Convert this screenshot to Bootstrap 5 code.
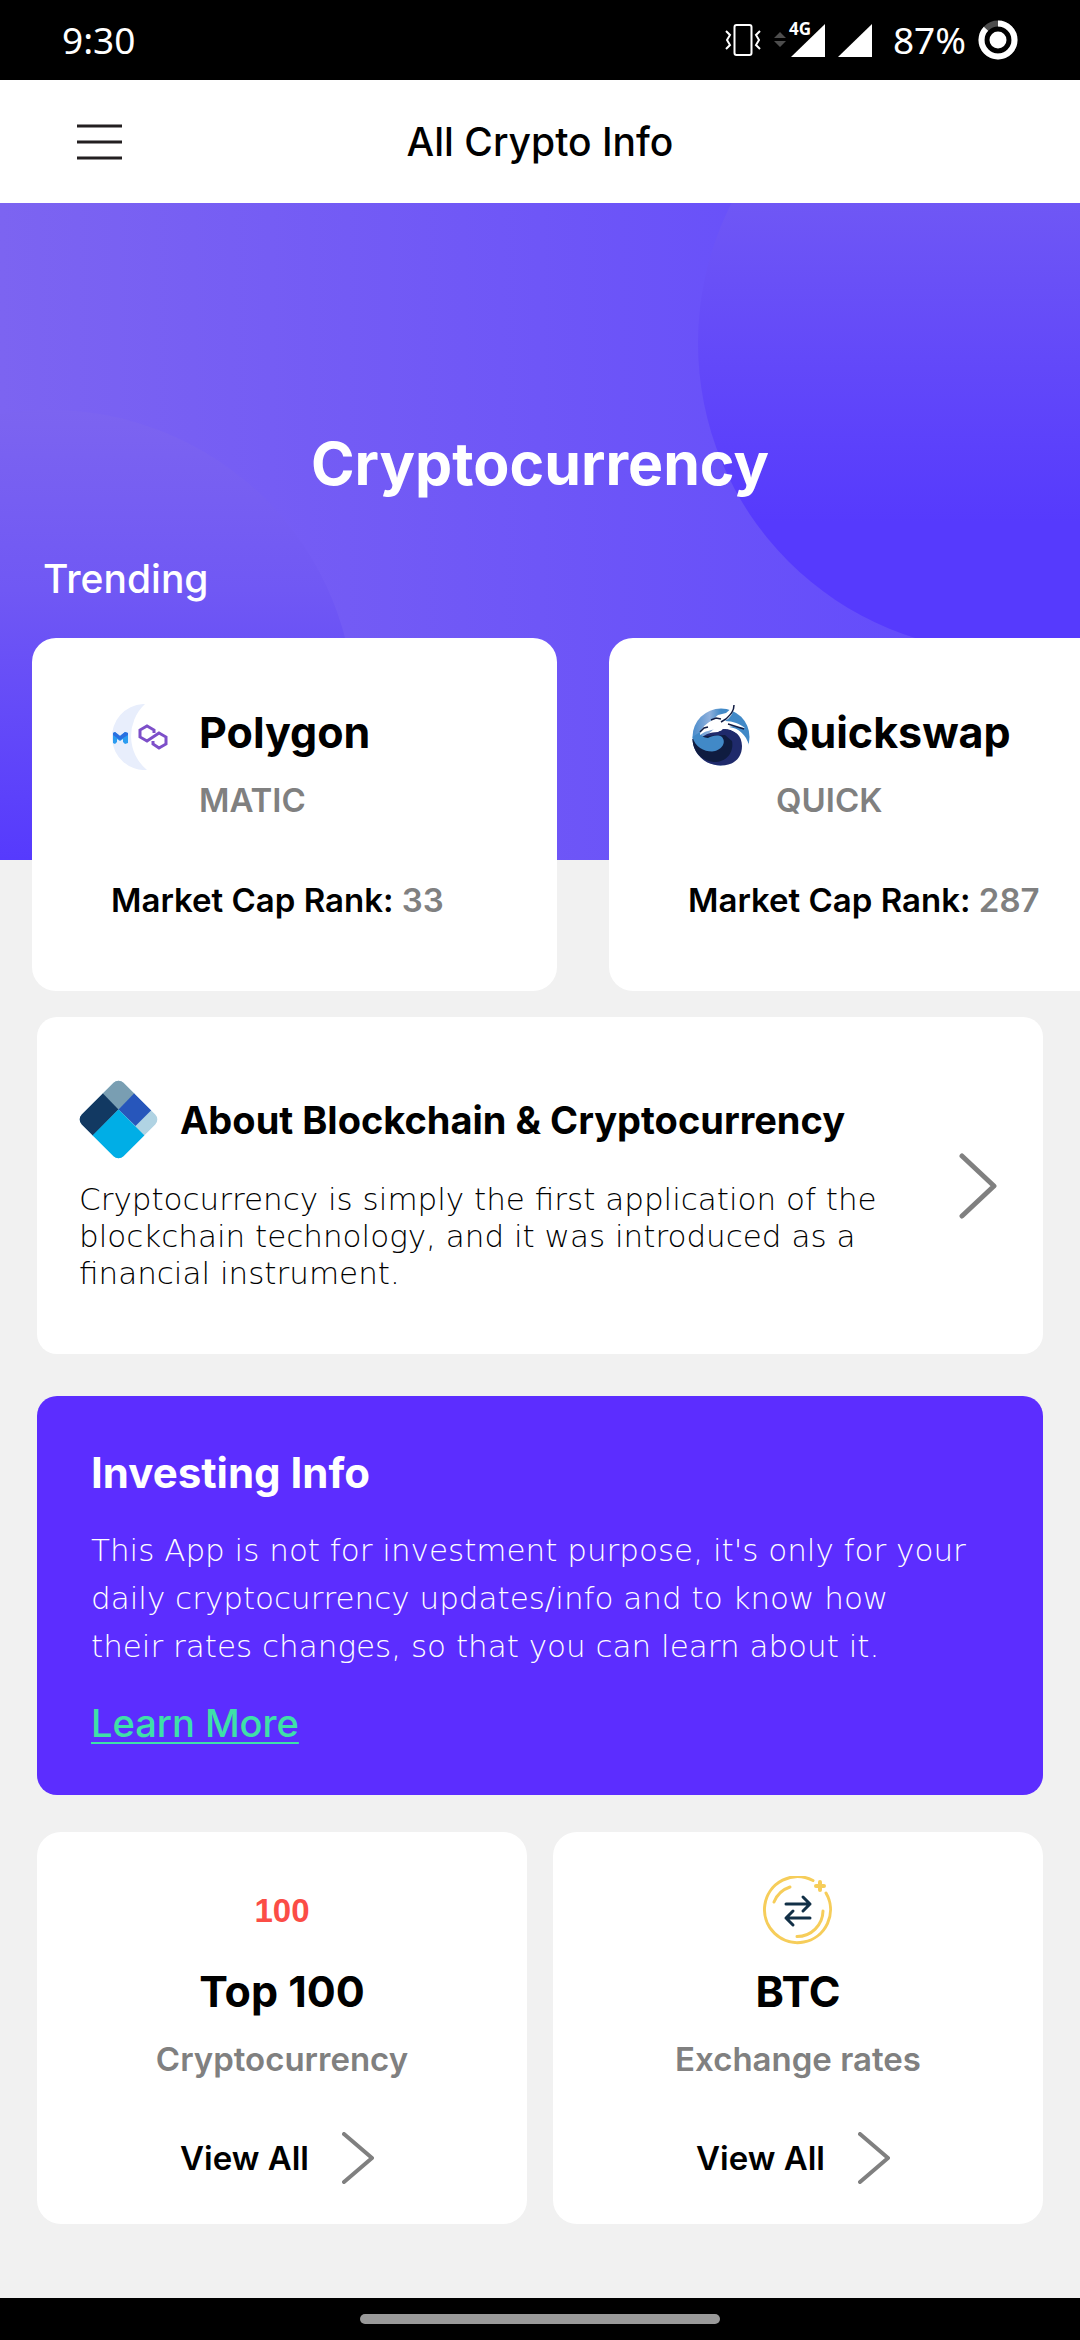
<!DOCTYPE html>
<html lang="en">
<head>
<meta charset="utf-8">
<meta name="viewport" content="width=device-width, initial-scale=1">
<title>All Crypto Info</title>
<link href="https://cdn.jsdelivr.net/npm/bootstrap@5.3.0/dist/css/bootstrap.min.css" rel="stylesheet">
<style>
  body { font-family: Inter, "Open Sans", sans-serif; background: #f1f1f1; color: #000; }
  h1, h2, h3, p { margin: 0; }
  svg { display: block; flex: none; }

  .status-bar { height: 80px; padding: 0 62px; background: #000; color: #fff; font: 400 37px/48px "Noto Sans", sans-serif; }
  .status-icons { gap: 12px; }
  .net-label { font: 700 17px "Noto Sans", sans-serif; }

  .app-bar { height: 123px; background: #fff; }
  .menu-btn { left: 77px; }
  .text-title { font-size: 39px; line-height: 44px; font-weight: 500; }

  .hero { padding: 227px 43px 259px; background: linear-gradient(90deg, #7c64f1, #6e56f7 50%, #6049fd); color: #fff; }
  .hero-title { font-size: 59px; line-height: 68px; font-weight: 700; margin-bottom: 59px; }

  .trend-list { margin-top: -222px; padding-left: 32px; gap: 52px; }
  .tile { background: #fff; border-radius: 24px; }
  .trend-tile { flex: 0 0 525px; padding: 66px 0 72px 79px; }
  .trend-head { gap: 22px; margin-bottom: 62px; }
  .trend-names { padding-top: 4px; }
  .coin-name { font-size: 43px; line-height: 48px; font-weight: 700; }
  .text-sub { font-size: 33px; line-height: 38px; font-weight: 600; }
  .text-dim { color: #808080; }
  .mt-sub { margin-top: 25px; }

  .page-body { padding: 26px 37px 74px; }
  .about-tile { padding: 63px 46px 62px 42px; border-radius: 20px; }
  .about-head { gap: 22px; margin-bottom: 22px; }
  .about-title { font-size: 38px; line-height: 44px; font-weight: 700; }
  .text-thin { font-family: "DejaVu Sans Light", "DejaVu Sans ExtraLight", Inter, sans-serif; font-size: 31px; font-weight: 200; }
  .about-text { line-height: 37px; }

  .invest-tile { margin-top: 42px; padding: 54px 54px 50px; border-radius: 20px; background: #5c2dff; color: #fff; }
  .invest-title { font-size: 42px; line-height: 46px; font-weight: 700; }
  .invest-text { margin: 30px 0 31px; line-height: 48px; }
  .learn-link { color: #3fe0a8; font-size: 38px; text-decoration-thickness: 2px; text-underline-offset: 5px; }

  .tile-grid { margin-top: 37px; gap: 26px; }
  .stat-tile { padding: 44px 0 40px; }
  .icon-box { height: 69px; margin-bottom: 22px; }
  .hundred { font: 700 33px/69px "Liberation Sans", sans-serif; color: #fb4d46; }
  .view-link { margin-top: 54px; gap: 33px; padding-right: 10px; color: #000; text-decoration: none; }

  .nav-strip { height: 42px; background: #000; }
  .nav-handle { width: 33.33%; height: 10px; border-radius: 5px; background: #999; }
</style>
</head>
<body class="d-flex flex-column min-vh-100 overflow-x-hidden">

<div class="status-bar d-flex align-items-center justify-content-between">
  <span>9:30</span>
  <div class="status-icons d-flex align-items-center">
    <svg width="36" height="34" viewBox="0 0 36 34" fill="none" stroke="#fff" stroke-width="2">
      <rect x="9.500" y="2" width="17" height="30" rx="2"/>
      <path d="M1 8l4 4-3 5 3 5-4 4M35 8l-4 4 3 5-3 5 4 4"/>
    </svg>
    <svg width="53" height="54" viewBox="0 -8 53 54">
      <path d="M1 17l6-6 6 6zM1 20h12l-6 6z" fill="#4d4d4d"/>
      <path d="M52 3v33H18z" fill="#fff"/>
      <text class="net-label" x="16" y="14" fill="#fff" stroke="#000" stroke-width="2" paint-order="stroke">4G</text>
    </svg>
    <svg width="35" height="38" viewBox="0 0 35 38"><path d="M34 3v33H0z" fill="#fff"/></svg>
    <span class="ms-2">87%</span>
    <svg width="40" height="40" viewBox="0 0 40 40">
      <circle cx="20" cy="20" r="16.500" fill="none" stroke="#4d4d4d" stroke-width="6"/>
      <circle cx="20" cy="20" r="16.500" fill="none" stroke="#fff" stroke-width="6" pathLength="100" stroke-dasharray="87 13" transform="rotate(-90 20 20)"/>
      <circle cx="20" cy="20" r="8.500" fill="#fff"/>
    </svg>
  </div>
</div>

<header class="app-bar d-flex align-items-center justify-content-center position-relative">
  <button type="button" class="menu-btn btn p-0 border-0 rounded-0 position-absolute" aria-label="Menu">
    <svg width="45" height="36" viewBox="0 0 45 36" stroke="#231f20" stroke-width="3"><path d="M0 2h45M0 18h45M0 34h45"/></svg>
  </button>
  <h1 class="text-title">All Crypto Info</h1>
</header>

<section class="hero position-relative">
  <svg class="position-absolute top-0 start-0 w-100 h-100" viewBox="0 0 1080 657" preserveAspectRatio="none">
    <defs>
      <linearGradient id="orbRight" gradientUnits="userSpaceOnUse" x1="0" y1="0" x2="0" y2="320"><stop offset="0" stop-color="#6f57f5"/><stop offset="1" stop-color="#563afd"/></linearGradient>
      <linearGradient id="orbLeft" gradientUnits="userSpaceOnUse" x1="0" y1="207" x2="0" y2="657"><stop offset="0" stop-color="#7c64f0"/><stop offset=".4" stop-color="#7058f4"/><stop offset="1" stop-color="#563afd"/></linearGradient>
    </defs>
    <circle cx="1007" cy="140" r="309" fill="url(#orbRight)"/>
    <circle cx="50" cy="512" r="305" fill="url(#orbLeft)"/>
  </svg>
  <div class="position-relative">
    <h2 class="hero-title text-center">Cryptocurrency</h2>
    <h3 class="text-title">Trending</h3>
  </div>
</section>

<section class="trend-list d-flex position-relative overflow-hidden">
  <article class="tile trend-tile">
    <div class="trend-head d-flex">
      <svg width="66" height="66" viewBox="2 0 66 66">
        <path d="M34 0A33 33 0 1 0 38 66A44 44 0 0 1 36 0z" fill="#e8eefc"/>
        <path d="M4 29l2-1 5 4 5-4 3 1v10l-3 1-2-2v-3l-3 2-3-2v3l-2 2-2-1z" fill="#2b9cf0"/>
        <path d="M4 29l2-1 5 4 5-4 3 1v2l-8 5-7-5z" fill="#2a6fe0"/>
        <path d="M45 29v-3l-7-4-7 4v7l7 4 12-8 7 4v7l-7 4-6-4v-3" fill="none" stroke="#7d4fc9" stroke-width="3"/>
      </svg>
      <div class="trend-names">
        <h3 class="coin-name">Polygon</h3>
        <p class="text-sub text-dim mt-sub">MATIC</p>
      </div>
    </div>
    <p class="text-sub">Market Cap Rank: <span class="text-dim">33</span></p>
  </article>

  <article class="tile trend-tile">
    <div class="trend-head d-flex">
      <svg width="66" height="66" viewBox="-4 -1 66 66">
        <defs><linearGradient id="sky" x1="0" y1="0" x2="1" y2="0"><stop offset="0" stop-color="#4a8ccb"/><stop offset=".3" stop-color="#8fb0dc"/><stop offset=".5" stop-color="#4189c7"/></linearGradient></defs>
        <circle cx="29" cy="32" r="28.500" fill="url(#sky)"/>
        <path d="M29 60.500L11 34L24 22C40 20 50 26 57 40C54 54 42 62 29 60.500z" fill="#fff"/>
        <path d="M.500 34C1 49 13 60.500 29 60.500C43 60.500 50 52 50 41C50 30 42 23 31 24L26 27C18 27 13 30 10 32z" fill="#1f2a6b"/>
        <path d="M.500 34C1 47 10 57 24 57C36 56 42 46 40 36L33 30 14 31z" fill="#0f1c40"/>
        <path d="M.500 32C3 42 12 46.500 20 46.500C29 46 35 38 30 32C26 29 20 31 16 33C12 33 8 30 8 27z" fill="#4189c7"/>
        <path d="M8 30c0-5 4-10 11-14l7-6 8-2 8-7c0 7-4 12-9 15 8 0 15 3 20 7-8-1-12-3-16-1 10 1 17 8 20 18-7-9-16-16-26-17l-2 3-4-2c-6 1-12 2-17 6z" fill="#fff"/>
        <path d="M42 0c0 6-3 9-8 14l-5 3M36 19l16 5M8 27l4-4 4-1M19 15l5-2 5 1" fill="none" stroke="#101b42" stroke-width="1.500"/>
      </svg>
      <div class="trend-names">
        <h3 class="coin-name">Quickswap</h3>
        <p class="text-sub text-dim mt-sub">QUICK</p>
      </div>
    </div>
    <p class="text-sub">Market Cap Rank: <span class="text-dim">287</span></p>
  </article>
</section>

<main class="page-body flex-grow-1">
  <article class="tile about-tile d-flex align-items-center justify-content-between">
    <div>
      <div class="about-head d-flex align-items-center">
        <svg width="79" height="79" viewBox="0 0 79 79">
          <defs><clipPath id="gem"><rect x="10" y="10" width="59" height="59" rx="7" transform="rotate(45 39.500 39.500)"/></clipPath></defs>
          <g clip-path="url(#gem)">
            <rect width="79" height="79" fill="#b0d3e3"/>
            <path d="M39.500-4l17 17-17 17-17-17z" fill="#799eb2"/>
            <path d="M23.500 13l16 16.500-26 26.500-20-20z" fill="#123962"/>
            <path d="M55.500 13l17 17-16 16-17-16.500z" fill="#2756bb"/>
            <path d="M39.500 29.500l27 27-27 27-27-27z" fill="#00aee6"/>
          </g>
        </svg>
        <h2 class="about-title">About Blockchain &amp; Cryptocurrency</h2>
      </div>
      <p class="about-text text-thin">Cryptocurrency is simply the first application of the<br>blockchain technology, and it was introduced as a<br>financial instrument.</p>
    </div>
    <svg width="38" height="66" viewBox="0 0 38 66" fill="none" stroke="#808080" stroke-width="5" stroke-linecap="round" stroke-linejoin="round"><path d="M3 3l32 30L3 63"/></svg>
  </article>

  <article class="invest-tile">
    <h2 class="invest-title">Investing Info</h2>
    <p class="invest-text text-thin">This App is not for investment purpose, it's only for your<br>daily cryptocurrency updates/info and to know how<br>their rates changes, so that you can learn about it.</p>
    <a href="#" class="text-title learn-link d-block">Learn More</a>
  </article>

  <div class="tile-grid d-flex">
    <article class="tile stat-tile flex-fill w-50 text-center">
      <div class="icon-box d-flex align-items-center justify-content-center"><span class="hundred">100</span></div>
      <h2 class="coin-name">Top 100</h2>
      <p class="text-sub text-dim mt-sub">Cryptocurrency</p>
      <a href="#" class="view-link text-sub d-flex align-items-center justify-content-center">View All
        <svg width="32" height="52" viewBox="0 0 32 52" fill="none" stroke="#808080" stroke-width="4" stroke-linecap="round" stroke-linejoin="round"><path d="M2 2l28 24L2 50"/></svg>
      </a>
    </article>
    <article class="tile stat-tile flex-fill w-50 text-center">
      <div class="icon-box d-flex align-items-center justify-content-center">
        <svg width="70" height="70" viewBox="0 0 70 70" fill="none" stroke="#f6cd5a" stroke-width="3" stroke-linecap="round">
          <path d="M50 4.500A33 33 0 1 0 63 17"/>
          <path d="M11 26A26 26 0 0 1 27 11M60 35A26 26 0 0 1 34 60.500"/>
          <path d="M57 6v8M53 10h8" stroke-width="4"/>
          <path d="M23 28h24M40 21l7 7-7 7M47 42H23M30 35l-7 7 7 7" stroke="#123047" stroke-linejoin="round"/>
        </svg>
      </div>
      <h2 class="coin-name">BTC</h2>
      <p class="text-sub text-dim mt-sub">Exchange rates</p>
      <a href="#" class="view-link text-sub d-flex align-items-center justify-content-center">View All
        <svg width="32" height="52" viewBox="0 0 32 52" fill="none" stroke="#808080" stroke-width="4" stroke-linecap="round" stroke-linejoin="round"><path d="M2 2l28 24L2 50"/></svg>
      </a>
    </article>
  </div>
</main>

<footer class="nav-strip d-flex align-items-center justify-content-center"><div class="nav-handle"></div></footer>

<script src="https://cdn.jsdelivr.net/npm/bootstrap@5.3.0/dist/js/bootstrap.bundle.min.js"></script>
</body>
</html>
